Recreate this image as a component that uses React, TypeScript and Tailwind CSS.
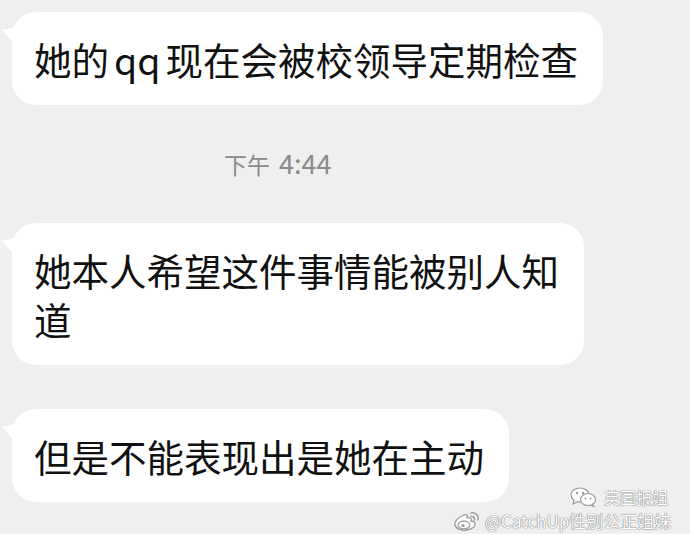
const cjk = "font-['Noto_Sans_CJK_SC','Noto_Sans',sans-serif]";

function Tail() {
  return (
    <svg
      className="absolute left-[-11px] top-[12px]"
      width="14"
      height="22"
      viewBox="0 0 14 22"
    >
      <path d="M14 2 C 9 5, 4 6, 0 5 C 4 9, 9 15, 14 20 Z" fill="#ffffff" />
    </svg>
  );
}

function Bubble({ children, className = "" }: { children: React.ReactNode; className?: string }) {
  return (
    <div
      className={`relative ml-[12px] w-fit rounded-[24px] bg-white pl-[22px] pr-[25px] pt-[22px] pb-[22px] text-[37.5px] leading-[49px] text-[#111] ${className}`}
    >
      <Tail />
      {children}
    </div>
  );
}

function WechatIcon() {
  return (
    <svg width="27" height="20" viewBox="0 0 27 20">
      <ellipse cx="10" cy="8" rx="9" ry="7" fill="#fff" stroke="#9a9a9a" strokeWidth="1.2" />
      <path d="M4 13 L3 17 L8 14.5" fill="#fff" stroke="#9a9a9a" strokeWidth="1.2" />
      <circle cx="7" cy="6" r="1.2" fill="#9a9a9a" />
      <circle cx="13" cy="6" r="1.2" fill="#9a9a9a" />
      <ellipse cx="18" cy="12.5" rx="7.5" ry="6" fill="#fff" stroke="#9a9a9a" strokeWidth="1.2" />
      <path d="M22 17 L24 19.5 L20 18" fill="#fff" stroke="#9a9a9a" strokeWidth="1.2" />
      <circle cx="15.5" cy="11.5" r="1" fill="#9a9a9a" />
      <circle cx="20.5" cy="11.5" r="1" fill="#9a9a9a" />
    </svg>
  );
}

function WeiboIcon() {
  return (
    <svg width="28" height="22" viewBox="0 0 28 22">
      <path
        d="M11 5 C 5 7, 1 12, 2 15 C 3 19, 9 21, 14 20 C 20 19, 23 16, 22 13 C 21 11, 18 11, 18 11 C 19 8, 17 7, 14 8 C 15 5, 14 4, 11 5 Z"
        fill="#fff"
        stroke="#9a9a9a"
        strokeWidth="1.3"
      />
      <ellipse cx="11" cy="15" rx="6" ry="3.8" fill="#fff" stroke="#9a9a9a" strokeWidth="1.2" />
      <circle cx="10" cy="15.5" r="1.6" fill="#9a9a9a" />
      <path d="M18 3 C 22 2, 26 5, 25 10" fill="none" stroke="#9a9a9a" strokeWidth="1.4" strokeLinecap="round" />
      <path d="M18 6.5 C 20 6, 22 7.5, 21.5 10" fill="none" stroke="#9a9a9a" strokeWidth="1.4" strokeLinecap="round" />
    </svg>
  );
}

export default function App() {
  return (
    <div className={`relative h-[534px] w-[690px] overflow-hidden bg-[#efefef] ${cjk}`}>
      <div className="flex flex-col pt-[12px]">
        <Bubble>
          她的<span className="mx-[5px]">qq</span>现在会被校领导定期检查
        </Bubble>

        <div className="mt-[43px] flex items-baseline pl-[224px] text-[23px] leading-[30px] text-[#8a8a8a]">
          <span>下午</span>
          <span className="ml-[9px] text-[27px]">4:44</span>
        </div>

        <Bubble className="mt-[44px]">
          她本人希望这件事情能被别人知
          <br />
          道
        </Bubble>

        <Bubble className="mt-[44px]">但是不能表现出是她在主动</Bubble>
      </div>

      {/* watermark */}
      <div className="absolute right-[22px] top-[487px] flex items-center gap-[7px] text-[16px] leading-[18px] text-white [text-shadow:0_0_1px_#666,0_0_1px_#666]">
        <WechatIcon />
        <span>英国报姐</span>
      </div>
      <div className="absolute left-[453px] top-[510px] flex items-center gap-[4px] text-[17px] leading-[20px] text-white [text-shadow:0_0_1px_#666,0_0_1px_#666]">
        <WeiboIcon />
        <span className="whitespace-nowrap">@CatchUp性别公正姐妹</span>
      </div>
    </div>
  );
}
